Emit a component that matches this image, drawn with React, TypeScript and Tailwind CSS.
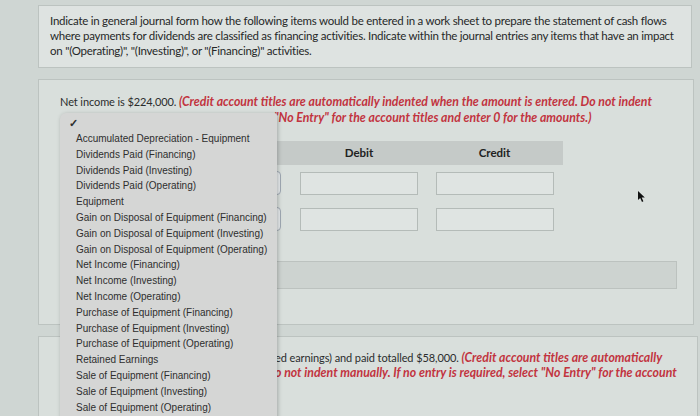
import React from "react";

const accounts = [
  "Accumulated Depreciation - Equipment",
  "Dividends Paid (Financing)",
  "Dividends Paid (Investing)",
  "Dividends Paid (Operating)",
  "Equipment",
  "Gain on Disposal of Equipment (Financing)",
  "Gain on Disposal of Equipment (Investing)",
  "Gain on Disposal of Equipment (Operating)",
  "Net Income (Financing)",
  "Net Income (Investing)",
  "Net Income (Operating)",
  "Purchase of Equipment (Financing)",
  "Purchase of Equipment (Investing)",
  "Purchase of Equipment (Operating)",
  "Retained Earnings",
  "Sale of Equipment (Financing)",
  "Sale of Equipment (Investing)",
  "Sale of Equipment (Operating)",
];

function EntryRow() {
  return (
    <div className="grid grid-cols-[230px_138px_135px] h-[36px] items-start pt-[6px]">
      <div className="pl-[8px]">
        <div className="w-[213px] h-[24px] rounded-[4px] border border-[#9fa9b3] bg-[#e6eaec]" />
      </div>
      <div className="flex justify-center pt-[1px]">
        <div className="w-[118px] h-[23px] border border-[#b4bbb8] bg-[#dfe4e2]" />
      </div>
      <div className="flex justify-center pt-[1px] pr-[2px]">
        <div className="w-[118px] h-[23px] border border-[#b4bbb8] bg-[#dfe4e2]" />
      </div>
    </div>
  );
}

export default function App() {
  return (
    <div
      className="relative w-[700px] h-[416px] overflow-hidden bg-[#cfd6d3] text-[#2b2d2d]"
      style={{ fontFamily: "Lato, 'Open Sans', sans-serif" }}
    >
      {/* Instructions card */}
      <div className="ml-[38px] mt-[5px] w-[654px] h-[63px] border border-[#bcc3c0] bg-[#dee3e1] pl-[11px] pt-[7px] text-[11.5px] leading-[15px] tracking-[-0.25px] whitespace-nowrap text-[#262828]">
        <div>Indicate in general journal form how the following items would be entered in a work sheet to prepare the statement of cash flows</div>
        <div>where payments for dividends are classified as financing activities. Indicate within the journal entries any items that have an impact</div>
        <div>on "(Operating)", "(Investing)", or "(Financing)" activities.</div>
      </div>

      {/* Question 1 card */}
      <div className="ml-[38px] mt-[11px] w-[656px] h-[246px] border border-[#bcc3c0] bg-[#d9dfdc] pl-[21px] pt-[14px]">
        <div className="text-[11px] leading-[16px] whitespace-nowrap tracking-[-0.1px]">
          Net income is $224,000.{" "}
          <span className="font-bold italic text-[#c2343f] text-[12.3px] tracking-normal">
            (Credit account titles are automatically indented when the amount is entered. Do not indent
          </span>
        </div>
        <div className="pl-[214px] text-[12.3px] leading-[16px] font-bold italic text-[#c2343f] whitespace-nowrap">
          "No Entry" for the account titles and enter 0 for the amounts.)
        </div>

        <div className="mt-[15px] w-[503px]">
          <div className="grid grid-cols-[230px_138px_135px] h-[24px] items-center bg-[#c5cac8] text-[11.5px] font-bold text-[#222]">
            <div />
            <div className="text-center">Debit</div>
            <div className="text-center pr-[2px]">Credit</div>
          </div>
          <EntryRow />
          <EntryRow />
        </div>

        <div className="mt-[24px] w-[617px] h-[28px] border border-[#bcc2bf] bg-[#cdd3d0]" />
      </div>

      {/* Question 2 card */}
      <div className="ml-[38px] mt-[11px] w-[660px] h-[100px] border border-[#bcc3c0] bg-[#d9dfdc] pl-[236px] pt-[13px] leading-[15px] whitespace-nowrap">
        <div className="text-[11px] tracking-[-0.1px]">
          ed earnings) and paid totalled $58,000.{" "}
          <span className="font-bold italic text-[#c2343f] text-[12.3px] tracking-normal">(Credit account titles are automatically</span>
        </div>
        <div className="font-bold italic text-[#c2343f] text-[12.3px]">
          o not indent manually. If no entry is required, select "No Entry" for the account
        </div>
      </div>

      {/* Open account dropdown */}
      <div
        className="absolute left-[60px] top-[113px] w-[217px] h-[310px] rounded-tl-[6px] rounded-tr-[3px] bg-[#d5d6d5] shadow-[1px_1px_4px_rgba(0,0,0,0.25)] pt-[3px] text-[10px] leading-[15.8px] text-[#2e2e2e]"
        style={{ fontFamily: "'Liberation Sans', Arial, sans-serif" }}
      >
        <div className="pl-[9px] h-[15px] leading-[15px] text-[11px] font-bold">✓</div>
        {accounts.map((a) => (
          <div key={a} className="pl-[16px] whitespace-nowrap">
            {a}
          </div>
        ))}
      </div>

      {/* Mouse pointer */}
      <svg className="absolute left-[637px] top-[190px]" width="9" height="13" viewBox="0 0 9 13">
        <path d="M1 1 L1 10 L3.2 8 L5 12 L6.4 11.3 L4.7 7.5 L7.8 7.5 Z" fill="#111" />
      </svg>
    </div>
  );
}
